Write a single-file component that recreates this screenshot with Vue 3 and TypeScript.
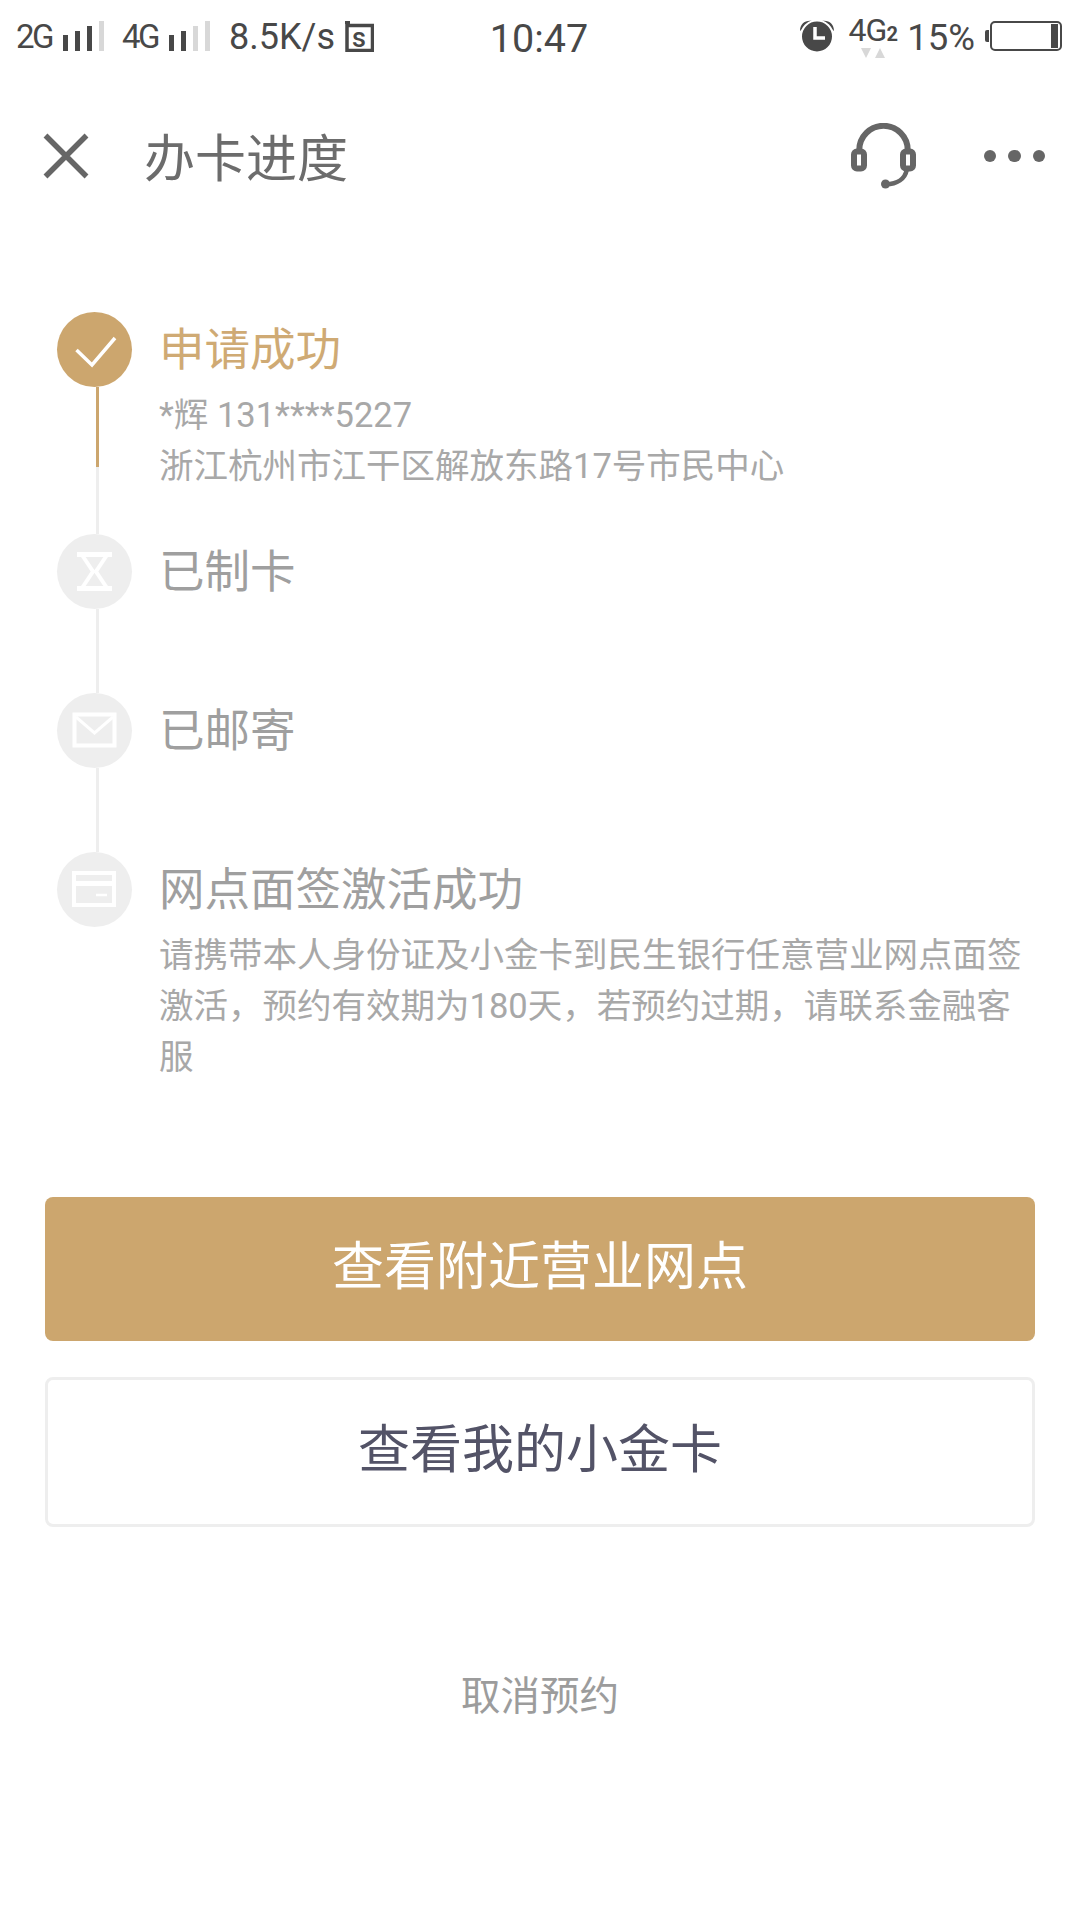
<script setup lang="ts">
interface Step {
  title: string
  icon: string
  lines?: string[]
  done?: boolean
}

const steps: Step[] = [
  { title: '申请成功', icon: 'check', done: true, lines: ['*辉 131****5227', '浙江杭州市江干区解放东路17号市民中心'] },
  { title: '已制卡', icon: 'hourglass' },
  { title: '已邮寄', icon: 'mail' },
  {
    title: '网点面签激活成功',
    icon: 'card',
    lines: ['请携带本人身份证及小金卡到民生银行任意营业网点面签激活，预约有效期为180天，若预约过期，请联系金融客服'],
  },
]
</script>

<template>
  <div class="page">
    <div class="status">
      <div class="status-left">
        <span class="net">2G</span>
        <span class="bars">
          <i class="b1"></i><i class="b2"></i><i class="b3"></i><i class="b4 off"></i>
        </span>
        <span class="net net2">4G</span>
        <span class="bars">
          <i class="b1"></i><i class="b2"></i><i class="b3 off"></i><i class="b4 off"></i>
        </span>
        <span class="speed">8.5K/s</span>
        <span class="sim">
          <svg width="29" height="31" viewBox="0 0 29 31">
            <path d="M2 4.500h25.500v25H2z" fill="none" stroke="#484848" stroke-width="3.500" />
            <path d="M0 0h5v3h-5z" fill="#484848" />
          </svg>
          <b>s</b>
        </span>
      </div>
      <div class="clock">10:47</div>
      <div class="status-right">
        <svg class="alarm" width="34" height="32" viewBox="0 0 34 32">
          <path d="M0 11C0 4 5 0 12 1z M34 11C34 4 29 0 22 1z" fill="#484848" />
          <circle cx="17" cy="16.500" r="16" fill="#484848" stroke="#fff" stroke-width="2" />
          <path d="M15 7v11h10" fill="none" stroke="#fff" stroke-width="3.500" />
        </svg>
        <span class="lte">
          <span class="lte-text">4G<small>2</small></span>
          <svg width="24" height="10" viewBox="0 0 24 10">
            <path d="M0 0h10l-5 10z M14 10h10l-5-10z" fill="#d8d8d8" />
          </svg>
        </span>
        <span class="pct">15%</span>
        <span class="battery-cap"></span>
        <span class="battery"><i></i></span>
      </div>
    </div>

    <header class="nav">
      <svg class="close" width="46" height="46" viewBox="0 0 46 46">
        <path d="M2.500 2.500l41 41M43.500 2.500l-41 41" stroke="#666" stroke-width="5.500" fill="none" />
      </svg>
      <h1>办卡进度</h1>
      <svg class="headset" width="66" height="66" viewBox="0 0 66 66">
        <path d="M8.300 27A24.200 24.200 0 0 1 56.700 27" fill="none" stroke="#666" stroke-width="6" />
        <rect x="3" y="28.500" width="10" height="17" rx="3" fill="#fff" stroke="#666" stroke-width="6" />
        <rect x="52" y="28.500" width="10" height="17" rx="3" fill="#fff" stroke="#666" stroke-width="6" />
        <path d="M55.700 47C54 56 46 61 35 61.500" fill="none" stroke="#666" stroke-width="4.500" />
        <circle cx="34.500" cy="61" r="4.500" fill="#666" />
      </svg>
      <span class="dots"><i></i><i></i><i></i></span>
    </header>

    <ol class="steps">
      <li v-for="step in steps" :key="step.title" class="step" :class="{ done: step.done }">
        <div class="rail">
          <div class="dot">
            <svg v-if="step.icon === 'check'" width="75" height="75" viewBox="0 0 75 75">
              <path d="M19.500 38L35 53 58 26" fill="none" stroke="#fff" stroke-width="3.500" />
            </svg>
            <svg v-else-if="step.icon === 'hourglass'" width="75" height="75" viewBox="0 0 75 75">
              <path d="M20 20.500h35M20 54.500h35" stroke="#fff" stroke-width="5" />
              <path d="M25 21L36 37.500 25 54M50 21L39 37.500 50 54" fill="none" stroke="#fff" stroke-width="4" />
            </svg>
            <svg v-else-if="step.icon === 'mail'" width="75" height="75" viewBox="0 0 75 75">
              <path d="M17.500 21.500h40v31h-40z" fill="none" stroke="#fff" stroke-width="4" />
              <path d="M19 24L37.500 40 56 24" fill="none" stroke="#fff" stroke-width="3" />
            </svg>
            <svg v-else width="75" height="75" viewBox="0 0 75 75">
              <path d="M17 21h40v32H17z" fill="none" stroke="#fff" stroke-width="4" />
              <path d="M17 31.500h40" stroke="#fff" stroke-width="5" />
              <path d="M39 43h11" stroke="#fff" stroke-width="2.500" />
            </svg>
          </div>
          <div v-if="step.done" class="line gold"></div>
          <div class="line"></div>
        </div>
        <div class="body">
          <div class="title">{{ step.title }}</div>
          <p v-for="line in step.lines" :key="line" class="desc">{{ line }}</p>
        </div>
      </li>
    </ol>

    <div class="actions">
      <button class="btn primary">查看附近营业网点</button>
      <button class="btn ghost">查看我的小金卡</button>
      <a class="cancel">取消预约</a>
    </div>
  </div>
</template>

<style>
body {
  margin: 0;
  background: #fff;
}
</style>

<style scoped>
.page {
  width: 1080px;
  height: 1920px;
  overflow: hidden;
  background: #fff;
  font-family: Roboto, "Noto Sans CJK SC", sans-serif;
}

.status {
  height: 72px;
  padding: 0 18px 0 16px;
  display: flex;
  align-items: center;
  justify-content: space-between;
  color: #484848;
}
.status-left,
.status-right {
  display: flex;
  align-items: center;
  width: 400px;
}
.status-right {
  justify-content: flex-end;
}
.net {
  font-size: 33px;
  letter-spacing: -2.500px;
}
.net2 {
  margin-left: 18px;
}
.bars {
  display: flex;
  align-items: flex-end;
  gap: 7px;
  margin-left: 11px;
  height: 30px;
}
.bars i {
  display: block;
  width: 5px;
  background: #484848;
}
.bars .b1 { height: 16px; }
.bars .b2 { height: 20px; }
.bars .b3 { height: 25px; }
.bars .b4 { height: 30px; }
.bars .off { background: #d8d8d8; }
.speed {
  font-size: 36px;
  margin: 2px 0 0 19px;
}
.sim {
  position: relative;
  display: flex;
  margin-left: 10px;
}
.sim b {
  position: absolute;
  left: 7px;
  top: 5px;
  font-size: 27px;
  font-weight: 500;
  line-height: 25px;
}
.clock {
  font-size: 39.500px;
  margin-top: 4px;
}
.alarm {
  margin-right: 15px;
}
.lte {
  display: flex;
  flex-direction: column;
  align-items: center;
  width: 48px;
  margin-top: 3px;
}
.lte-text {
  font-size: 32px;
  line-height: 27px;
  letter-spacing: -1px;
  white-space: nowrap;
}
.lte-text small {
  font-size: 20px;
  font-weight: 700;
  letter-spacing: 0;
}
.pct {
  font-size: 36.500px;
  margin: 3px 0 0 10px;
}
.battery-cap {
  width: 4px;
  height: 12px;
  margin-left: 10px;
  background: #484848;
  border-radius: 2px 0 0 2px;
}
.battery {
  width: 72px;
  height: 30px;
  margin-left: 1px;
  box-sizing: border-box;
  border: 2px solid #484848;
  border-radius: 5px;
  padding: 1px 2px;
  display: flex;
  justify-content: flex-end;
}
.battery i {
  width: 7px;
  background: #484848;
}

.nav {
  height: 168px;
  padding: 0 35px 0 43px;
  display: flex;
  align-items: center;
}
.nav h1 {
  margin: 0 0 2px 55px;
  flex: 1;
  font-size: 51px;
  font-weight: 400;
  color: #6c6c6c;
}
.headset {
  margin-right: 67px;
}
.dots {
  display: flex;
  gap: 12px;
}
.dots i {
  width: 12.500px;
  height: 12.500px;
  border-radius: 50%;
  background: #666;
}

.steps {
  list-style: none;
  margin: 0;
  padding: 72px 45px 0 57px;
}
.step {
  display: flex;
  min-height: 159px;
}
.step.done {
  min-height: 222px;
}
.rail {
  width: 75px;
  display: flex;
  flex-direction: column;
  align-items: center;
}
.step:last-child .line {
  display: none;
}
.dot {
  width: 75px;
  height: 75px;
  flex: none;
  border-radius: 50%;
  background: #eee;
  display: flex;
}
.done .dot {
  background: #cca66e;
}
.line {
  flex: 1;
  width: 3px;
  background: #eee;
  margin-left: 6px;
}
.line.gold {
  flex: none;
  height: 80px;
  background: #cca66e;
}
.body {
  margin-left: 27px;
  padding-top: 3px;
  flex: 1;
  min-width: 0;
}
.title {
  font-size: 45.500px;
  line-height: 72px;
  margin-bottom: 3px;
  color: #9f9f9f;
}
.done .title {
  color: #cfaa74;
}
.desc {
  margin: 0;
  font-size: 34.500px;
  line-height: 51px;
  color: #a8a8a8;
}

.actions {
  padding: 0 45px;
  margin-top: 114px;
  display: flex;
  flex-direction: column;
  align-items: center;
}
.btn {
  display: block;
  width: 100%;
  padding: 0 0 13px;
  font-family: inherit;
  font-size: 52px;
  border-radius: 8px;
}
.primary {
  height: 144px;
  border: 0;
  background: #cca66e;
  color: #fff;
}
.ghost {
  height: 150px;
  margin-top: 36px;
  background: #fff;
  border: 3px solid #eee;
  color: #535367;
}
.cancel {
  margin-top: 140px;
  font-size: 39.500px;
  line-height: 60px;
  color: #9c9c9c;
}
</style>
